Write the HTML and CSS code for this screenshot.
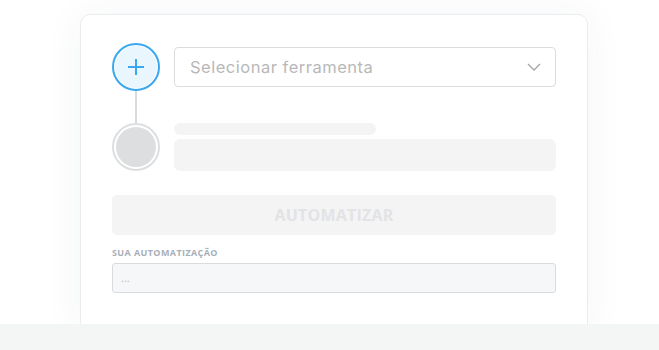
FILE: index.html
```html
<!DOCTYPE html>
<html lang="pt-BR">
<head>
    <meta charset="UTF-8">
    <meta name="viewport" content="width=device-width, initial-scale=1.0">
    <title>Automatizar</title>
    <link rel="stylesheet" href="styles.css">
</head>
<body>
    <main class="stage">
        <div class="card">
            <div class="step">
                <div class="rail">
                    <div class="node node-active">
                        <svg width="18" height="18" viewBox="0 0 18 18"><path d="M9 1v16M1 9h16" stroke="#3aa8ee" stroke-width="2" fill="none"/></svg>
                    </div>
                    <div class="line"></div>
                </div>
                <div class="step-body">
                    <div class="select">
                        <span>Selecionar ferramenta</span>
                        <svg width="14" height="8" viewBox="0 0 14 8"><path d="M1 1l6 6 6-6" stroke="#a5a5a5" stroke-width="1.3" fill="none"/></svg>
                    </div>
                </div>
            </div>
            <div class="step">
                <div class="rail">
                    <div class="node node-empty"><div class="dot"></div></div>
                </div>
                <div class="step-body">
                    <div class="skel skel-short"></div>
                    <div class="skel skel-long"></div>
                </div>
            </div>
            <button class="btn" disabled>AUTOMATIZAR</button>
            <label class="label">SUA AUTOMATIZAÇÃO</label>
            <div class="output">...</div>
        </div>
    </main>
    <footer class="bar"></footer>
</body>
</html>
```

FILE: styles.css
```css
body {
    margin: 0;
    font-family: "Open Sans", "Liberation Sans", sans-serif;
    background: #fff;
    height: 350px;
    overflow: hidden;
    display: flex;
    flex-direction: column;
}
.stage {
    height: 324px;
    overflow: hidden;
    flex-shrink: 0;
}
.card {
    width: 444px;
    margin: 14px 0 0 80px;
    padding: 28px 31px 40px;
    background: #fff;
    border: 1px solid #ececec;
    border-radius: 10px;
    box-shadow: 0 0 40px rgba(40, 60, 90, 0.05);
    box-sizing: content-box;
}
.step {
    display: flex;
    gap: 14px;
}
.rail {
    width: 48px;
    display: flex;
    flex-direction: column;
    align-items: center;
}
.node {
    width: 48px;
    height: 48px;
    border-radius: 50%;
    box-sizing: border-box;
    display: flex;
    align-items: center;
    justify-content: center;
}
.node-active {
    border: 2px solid #3aa8ee;
    background: #eaf6fe;
    box-shadow: inset 0 0 0 1px #fff;
}
.node-empty {
    border: 2px solid #dcdee0;
    padding: 2px;
}
.dot {
    width: 100%;
    height: 100%;
    border-radius: 50%;
    background: #dcdee0;
}
.line {
    width: 2px;
    height: 32px;
    background: #d8dbde;
}
.step-body {
    flex: 1;
}
.select {
    margin-top: 4px;
    height: 40px;
    box-sizing: border-box;
    border: 1px solid #dcdcdc;
    border-radius: 4px;
    padding: 0 14px 0 15px;
    display: flex;
    align-items: center;
    justify-content: space-between;
    font-family: Inter, "Open Sans", sans-serif;
    font-size: 16.5px;
    letter-spacing: 0.5px;
    color: #b8b8b8;
}
.skel {
    background: #f4f4f4;
    border-radius: 6px;
}
.skel-short {
    width: 202px;
    height: 12px;
    margin-bottom: 4px;
}
.skel-long {
    height: 32px;
}
.btn {
    display: block;
    width: 100%;
    height: 40px;
    margin-top: 24px;
    border: 0;
    border-radius: 5px;
    background: #f4f4f5;
    color: #e2e3e5;
    font-family: inherit;
    font-size: 16px;
    font-weight: 700;
    letter-spacing: 0.2px;
}
.label {
    display: block;
    margin-top: 12px;
    font-size: 9px;
    font-weight: 700;
    letter-spacing: 0.4px;
    color: #a8afb9;
    line-height: 12px;
}
.output {
    margin-top: 4px;
    height: 30px;
    box-sizing: border-box;
    border: 1px solid #d9dbde;
    border-radius: 3px;
    background: #f6f7f9;
    padding: 0 8px;
    font-size: 11px;
    line-height: 28px;
    color: #b8bcc2;
}
.bar {
    flex: 1;
    background: #f4f5f5;
}
```
